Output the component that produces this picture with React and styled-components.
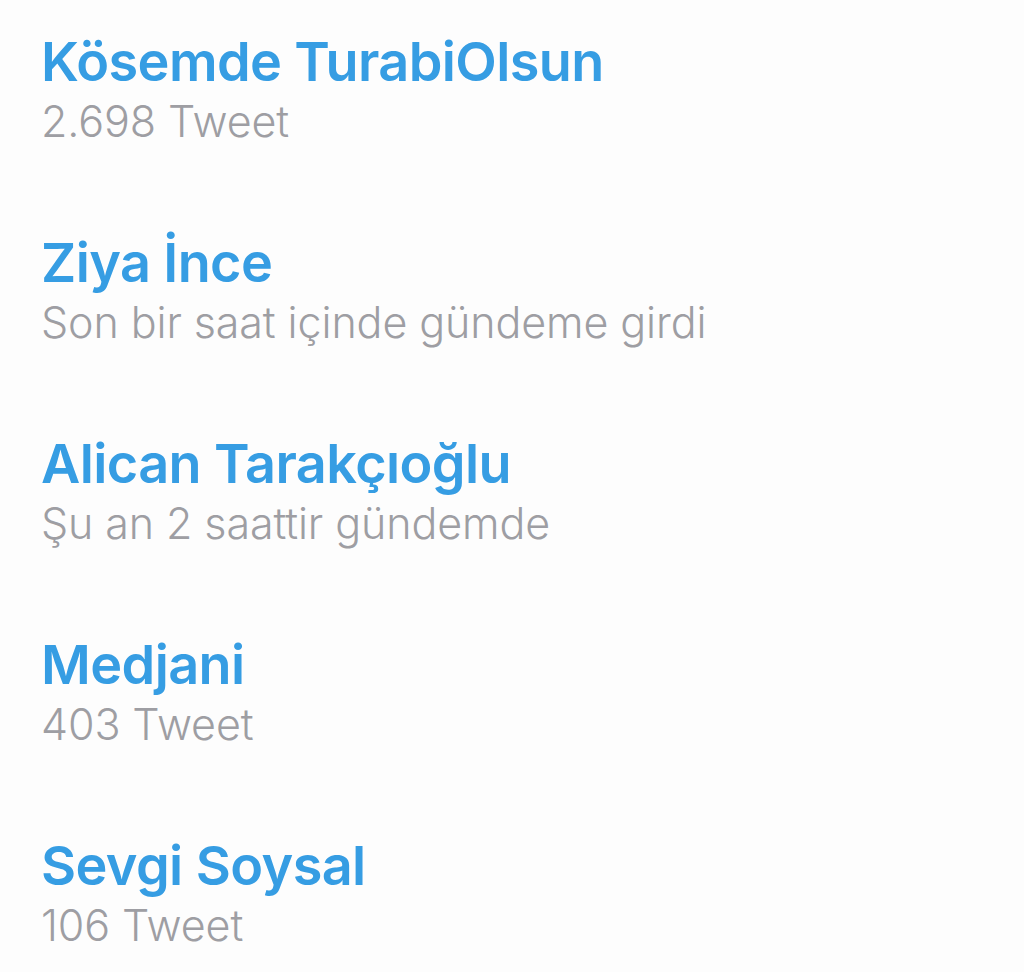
import React from "react";
import styled, { createGlobalStyle } from "styled-components";

const Global = createGlobalStyle`
  html, body {
    margin: 0;
    padding: 0;
    background: #fdfdfd;
  }
`;

const List = styled.div`
  display: flex;
  flex-direction: column;
  padding: 30px 0 0 41px;
  width: 1024px;
  height: 972px;
  box-sizing: border-box;
  overflow: hidden;
`;

const Row = styled.div`
  display: flex;
  flex-direction: column;
  flex-shrink: 0;
  height: 201px;
`;

const Title = styled.div`
  font-family: "Inter", "Liberation Sans", sans-serif;
  font-weight: 600;
  font-size: 54px;
  line-height: 64px;
  color: #369de3;
  letter-spacing: -0.6px;
`;

const Meta = styled.div`
  font-family: "Inter", "Liberation Sans", sans-serif;
  font-weight: 300;
  font-size: 43px;
  line-height: 54px;
  color: #9e9ea3;
  letter-spacing: -0.1px;
`;

const trends = [
  { name: "Kösemde TurabiOlsun", meta: "2.698 Tweet" },
  { name: "Ziya İnce", meta: "Son bir saat içinde gündeme girdi" },
  { name: "Alican Tarakçıoğlu", meta: "Şu an 2 saattir gündemde" },
  { name: "Medjani", meta: "403 Tweet" },
  { name: "Sevgi Soysal", meta: "106 Tweet" },
];

export default function App() {
  return (
    <>
      <Global />
      <List>
        {trends.map((t) => (
          <Row key={t.name}>
            <Title>{t.name}</Title>
            <Meta>{t.meta}</Meta>
          </Row>
        ))}
      </List>
    </>
  );
}
